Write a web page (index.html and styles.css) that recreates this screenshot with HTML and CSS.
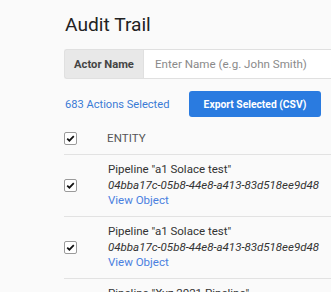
FILE: index.html
```html
<!DOCTYPE html>
<html>
<head>
<meta charset="utf-8">
<link rel="stylesheet" href="styles.css">
</head>
<body>
<div class="page">
  <h1 class="title">Audit Trail</h1>
  <div class="input-group">
    <span class="addon">Actor Name</span>
    <input class="field" type="text" placeholder="Enter Name (e.g. John Smith)">
  </div>
  <div class="actions">
    <span class="count">683 Actions Selected</span>
    <button class="export">Export Selected (CSV)</button>
  </div>
  <div class="table">
    <div class="row head">
      <div class="cell-check"><span class="cb"><svg viewBox="0 0 13 13"><path d="M2.6 6.6 L5.2 9.1 L10.4 3.6" /></svg></span></div>
      <div class="cell-entity head-label">ENTITY</div>
    </div>
    <div class="row">
      <div class="cell-check"><span class="cb"><svg viewBox="0 0 13 13"><path d="M2.6 6.6 L5.2 9.1 L10.4 3.6" /></svg></span></div>
      <div class="cell-entity">
        <div class="name">Pipeline "a1 Solace test"</div>
        <div class="hash">04bba17c-05b8-44e8-a413-83d518ee9d48</div>
        <a class="link">View Object</a>
      </div>
    </div>
    <div class="row">
      <div class="cell-check"><span class="cb"><svg viewBox="0 0 13 13"><path d="M2.6 6.6 L5.2 9.1 L10.4 3.6" /></svg></span></div>
      <div class="cell-entity">
        <div class="name">Pipeline "a1 Solace test"</div>
        <div class="hash">04bba17c-05b8-44e8-a413-83d518ee9d48</div>
        <a class="link">View Object</a>
      </div>
    </div>
    <div class="row">
      <div class="cell-check"><span class="cb"><svg viewBox="0 0 13 13"><path d="M2.6 6.6 L5.2 9.1 L10.4 3.6" /></svg></span></div>
      <div class="cell-entity">
        <div class="name">Pipeline "Xyz 2021 Pipeline"</div>
        <div class="hash">04bba17c-05b8-44e8-a413-83d518ee9d48</div>
        <a class="link">View Object</a>
      </div>
    </div>
  </div>
</div>
</body>
</html>
```

FILE: styles.css
```css
html, body {
  margin: 0;
  padding: 0;
  background: #fafafa;
  overflow: hidden;
}
body {
  font-family: Roboto, "Liberation Sans", sans-serif;
  color: #333;
}
.page {
  padding: 13px 0 0 64px;
  width: 300px;
}
.title {
  margin: 0 0 12px 1px;
  font-size: 19.2px;
  line-height: 24px;
  font-weight: 400;
  color: #222;
}
.input-group {
  display: flex;
  height: 30px;
  width: 320px;
}
.addon {
  box-sizing: border-box;
  width: 79px;
  flex: none;
  display: flex;
  align-items: center;
  justify-content: center;
  background: #e8e8e8;
  border: 1px solid #e0e0e0;
  border-right: none;
  border-radius: 3px 0 0 3px;
  font-size: 11.2px;
  font-weight: 700;
  color: #444;
}
.field {
  box-sizing: border-box;
  flex: 1;
  height: 30px;
  margin: 0;
  padding: 0 11px;
  border: 1px solid #e0e0e0;
  background: #fff;
  font-family: Roboto, "Liberation Sans", sans-serif;
  font-size: 11.6px;
  outline: none;
}
.field::placeholder {
  color: #8a8a8a;
}
.actions {
  display: flex;
  align-items: center;
  margin-top: 12px;
  height: 26px;
}
.count {
  font-size: 11.1px;
  color: #3a7bd5;
  width: 124px;
  padding-left: 1px;
}
.export {
  box-sizing: border-box;
  width: 132px;
  height: 26px;
  border: none;
  border-radius: 3px;
  background: #2a7be0;
  color: #fff;
  font-family: Roboto, "Liberation Sans", sans-serif;
  font-size: 10.3px;
  font-weight: 700;
  padding: 0;
}
.table {
  margin-top: 5px;
  width: 300px;
}
.row {
  display: flex;
  align-items: center;
  border-bottom: 1px solid #e2e2e2;
}
.row.head {
  height: 31px;
  padding-top: 1px;
}
.row:not(.head) {
  height: 61px;
}
.cell-check {
  width: 44px;
  flex: none;
  display: flex;
}
.cb {
  box-sizing: border-box;
  width: 13px;
  height: 13px;
  border: 1px solid #9a9a9a;
  border-radius: 2px;
  background: #fff;
  display: block;
}
.cb svg {
  display: block;
  width: 11px;
  height: 11px;
  margin: 0;
}
.cb path {
  fill: none;
  stroke: #111;
  stroke-width: 2;
}
.head-label {
  font-size: 8.8px;
  color: #555;
  margin-left: -1px;
  letter-spacing: 0.1px;
}
.cell-entity {
  font-size: 11.5px;
  line-height: 15.4px;
  white-space: nowrap;
}
.name {
  color: #333;
}
.hash {
  font-style: italic;
  color: #333;
}
.link {
  color: #4a80e0;
  display: block;
}
```
